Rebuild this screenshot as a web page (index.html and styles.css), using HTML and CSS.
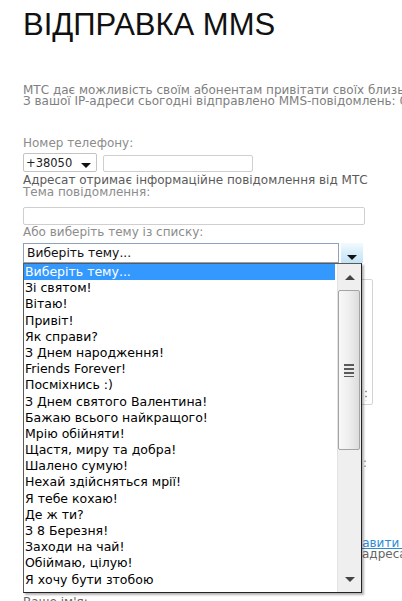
FILE: index.html
```html
<!DOCTYPE html>
<html lang="uk">
<head>
<meta charset="utf-8">
<title>Відправка MMS</title>
<link rel="stylesheet" href="styles.css">
</head>
<body>
<main class="page">
  <h1 class="title">ВІДПРАВКА MMS</h1>

  <div class="intro">
    <p>МТС дає можливість своїм абонентам привітати своїх близьких і друзів безкоштовним MMS-повідомленням.</p>
    <p>З вашої IP-адреси сьогодні відправлено MMS-повідомлень: 0 з 5</p>
  </div>

  <form class="mms-form">
    <label class="label">Номер телефону:</label>
    <div class="phone-row">
      <div class="prefix">
        <span>+38050</span>
        <svg class="caret" width="10" height="5" viewBox="0 0 10 5"><path d="M0 0h10L5 5z" fill="#111"/></svg>
      </div>
      <input class="field phone" type="text">
    </div>
    <p class="note">Адресат отримає інформаційне повідомлення від МТС</p>

    <label class="label">Тема повідомлення:</label>
    <input class="field subject" type="text">

    <label class="label label-pick">Або виберіть тему із списку:</label>
    <div class="combo">
      <div class="combo-box">Виберіть тему...</div>
      <div class="combo-btn">
        <svg width="10" height="5" viewBox="0 0 10 5"><path d="M0 0h10L5 5z" fill="#111"/></svg>
      </div>

      <div class="combo-list">
        <ul class="options">
          <li class="selected">Виберіть тему...</li>
          <li>Зі святом!</li>
          <li>Вітаю!</li>
          <li>Привіт!</li>
          <li>Як справи?</li>
          <li>З Днем народження!</li>
          <li>Friends Forever!</li>
          <li>Посміхнись :)</li>
          <li>З Днем святого Валентина!</li>
          <li>Бажаю всього найкращого!</li>
          <li>Мрію обійняти!</li>
          <li>Щастя, миру та добра!</li>
          <li>Шалено сумую!</li>
          <li>Нехай здійсняться мрії!</li>
          <li>Я тебе кохаю!</li>
          <li>Де ж ти?</li>
          <li>З 8 Березня!</li>
          <li>Заходи на чай!</li>
          <li>Обіймаю, цілую!</li>
          <li>Я хочу бути зтобою</li>
        </ul>
        <div class="scrollbar">
          <div class="sb-arrow">
            <svg width="10" height="5" viewBox="0 0 10 5"><path d="M0 5h10L5 0z" fill="#444"/></svg>
          </div>
          <div class="sb-thumb">
            <span class="grip"></span>
          </div>
          <div class="sb-track"></div>
          <div class="sb-arrow">
            <svg width="10" height="5" viewBox="0 0 10 5"><path d="M0 0h10L5 5z" fill="#444"/></svg>
          </div>
        </div>
      </div>
    </div>

    <div class="message">
      <textarea class="message-text"></textarea>
      <span class="message-grip"></span>
    </div>

    <p class="counter">:</p>

    <p class="send"><a href="#" class="send-link">відправити листівку</a></p>
    <p class="send-note">адресата</p>

    <p class="label footer-label">Ваше ім'я:</p>
  </form>
</main>
</body>
</html>
```

FILE: styles.css
```css
html, body {
  margin: 0;
  overflow: hidden;
  background: #fff;
}

body {
  font-family: "DejaVu Sans", Verdana, sans-serif;
  font-size: 12px;
  color: #808080;
}

.page {
  width: 760px;
  padding: 7px 0 0 23px;
}

.title {
  margin: 0;
  font: 400 31px/36px "Liberation Sans", Arial, sans-serif;
  color: #111;
}

.intro {
  margin-top: 42px;
  line-height: 10.5px;
  color: #808080;
  white-space: nowrap;
}

.intro p {
  margin: 0;
}

.mms-form {
  margin-top: 31px;
}

.label {
  display: block;
  margin: 0;
  line-height: 12px;
  color: #8c8c8c;
}

.phone-row {
  display: flex;
  align-items: flex-start;
  gap: 6px;
  margin-top: 4px;
}

.prefix {
  box-sizing: border-box;
  width: 74px;
  height: 19px;
  display: flex;
  align-items: center;
  padding: 0 5px 0 2px;
  border: 1px solid #c4c4c4;
  border-radius: 2px;
  font-size: 11.5px;
  color: #222;
}

.caret {
  margin: 6px 0 0 auto;
}

.field {
  box-sizing: border-box;
  display: block;
  margin: 0;
  padding: 0 3px;
  border: 1px solid #cfcfcf;
  border-radius: 2px;
  background: #fff;
  font: inherit;
  outline: none;
}

.phone {
  width: 150px;
  height: 17px;
  margin-top: 2px;
}

.note {
  margin: 2px 0 0;
  line-height: 12px;
  color: #5a5a5a;
}

.subject {
  width: 342px;
  height: 18px;
  margin-top: 9px;
}

.label-pick {
  margin-top: 1px;
}

/* open combo box with its dropdown list */
.combo {
  position: relative;
  display: flex;
  gap: 2px;
  width: 340px;
  margin-top: 5px;
}

.combo-box {
  box-sizing: border-box;
  width: 316px;
  height: 20px;
  padding: 2px 3px;
  border: 1px solid #8da2bd;
  font-size: 12.3px;
  line-height: 15px;
  color: #111;
}

.combo-btn {
  box-sizing: border-box;
  width: 22px;
  height: 20px;
  display: flex;
  align-items: flex-end;
  justify-content: center;
  padding-bottom: 3px;
  background: linear-gradient(#f4fafe 0%, #dcf0fb 40%, #c3e3f6 100%);
}

.combo-list {
  position: absolute;
  top: 20px;
  left: 0;
  z-index: 2;
  box-sizing: border-box;
  width: 339px;
  height: 330px;
  display: flex;
  border: 1px solid #5a5a5a;
  border-right-color: #222;
  border-bottom-color: #222;
  background: #fff;
  box-shadow: 2px 2px 2px rgba(0, 0, 0, 0.3);
}

.options {
  flex: 1;
  margin: 0;
  padding: 0 2px 0 0;
  list-style: none;
  font-size: 12.5px;
  color: #000;
}

.options li {
  height: 16.2px;
  line-height: 16.2px;
  padding-left: 1px;
  white-space: nowrap;
}

.options .selected {
  background: #3399ff;
  color: #fff;
}

.scrollbar {
  width: 23px;
  display: flex;
  flex-direction: column;
  background: #efefef;
  border-left: 1px solid #e2e2e2;
}

.sb-arrow {
  height: 26px;
  display: flex;
  align-items: center;
  justify-content: center;
}

.sb-thumb {
  box-sizing: border-box;
  height: 160px;
  margin: 0 1px 0 0;
  display: flex;
  align-items: center;
  justify-content: center;
  border: 1px solid #a4a4a4;
  border-radius: 2px;
  background: linear-gradient(90deg, #f8f8f8 0%, #eeeeee 50%, #dcdcdc 100%);
}

.grip {
  width: 10px;
  height: 13px;
  background: repeating-linear-gradient(#5a5a5a 0 2px, #ececec 2px 4px);
}

.sb-track {
  flex: 1;
}

/* message area that sits under the open list */
.message {
  position: relative;
  width: 350px;
  margin-top: 16px;
}

.message-text {
  box-sizing: border-box;
  display: block;
  width: 350px;
  height: 126px;
  margin: 0;
  border: 1px solid #d4d4d4;
  border-radius: 2px;
  resize: none;
  outline: none;
}

.message-grip {
  position: absolute;
  right: 6px;
  bottom: 4px;
  width: 2px;
  height: 12px;
  background: radial-gradient(circle, #9a9a9a 0.8px, transparent 1.2px) 0 0 / 2px 5px;
}

.counter {
  width: 344px;
  margin: 52px 0 0;
  line-height: 12px;
  text-align: right;
  color: #8c8c8c;
}

.send {
  margin: 68px 0 0;
  padding-left: 305px;
  line-height: 12px;
  white-space: nowrap;
}

.send-link {
  color: #2d8bd3;
}

.send-note {
  margin: 0;
  padding-left: 339px;
  line-height: 11px;
  white-space: nowrap;
  color: #666;
}

.footer-label {
  margin-top: 36px;
  color: #666;
}
```
